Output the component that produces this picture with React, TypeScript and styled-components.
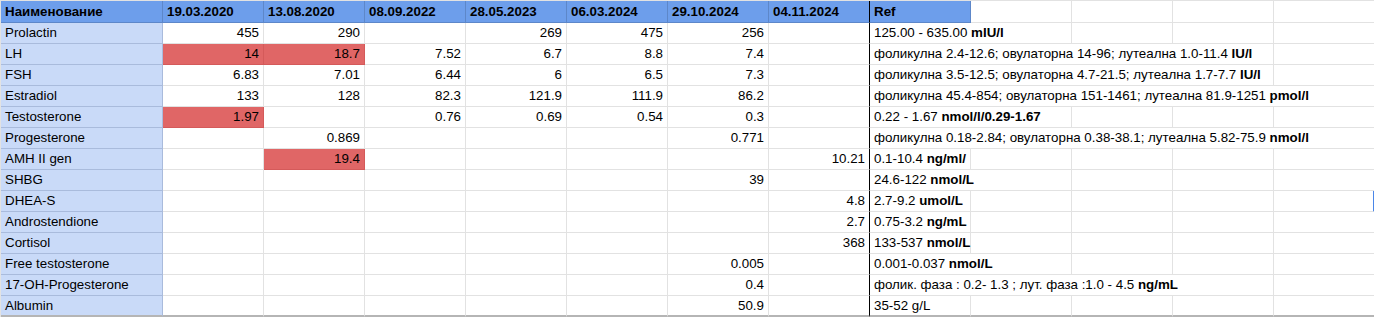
import React from 'react';
import styled, { createGlobalStyle, css } from 'styled-components';

const GlobalStyle = createGlobalStyle`
  html, body {
    margin: 0;
    padding: 0;
    background: #fff;
  }
  body {
    font-family: "Liberation Sans", Arial, sans-serif;
    font-size: 13.33px;
    color: #000;
    overflow: hidden;
  }
`;

type Tone = 'head' | 'label' | 'plain' | 'red';

const Sheet = styled.div`
  display: grid;
  grid-template-columns: 162px repeat(12, 101px);
  grid-auto-rows: 21px;
  grid-template-rows: 22px;
  border-top: 1px solid #e2e2e2;
  border-left: 1px solid #e2e2e2;
  width: max-content;
`;

const tones = {
  head: css`
    background: #6d9eeb;
    font-weight: bold;
    border-color: rgba(0, 0, 0, 0.14);
  `,
  label: css`
    background: #c9daf8;
    border-color: #a9bbdc;
  `,
  plain: css`
    background: #fff;
    border-color: #e2e2e2;
  `,
  red: css`
    background: #e06666;
    border-color: #d45a5a;
  `,
};

const Cell = styled.div<{
  $tone: Tone;
  $right?: boolean;
  $span?: number;
  $divider?: boolean;
  $last?: boolean;
  $cursor?: boolean;
}>`
  box-sizing: border-box;
  border-right: 1px solid;
  border-bottom: 1px solid;
  padding: 0 4px;
  line-height: 20px;
  white-space: nowrap;
  overflow: visible;
  text-align: ${(p) => (p.$right ? 'right' : 'left')};
  grid-column: span ${(p) => p.$span ?? 1};
  ${(p) => tones[p.$tone]}
  ${(p) =>
    p.$tone === 'head' &&
    css`
      line-height: 21px;
    `}
  ${(p) =>
    p.$divider &&
    css`
      border-right-color: #000;
    `}
  ${(p) =>
    p.$cursor &&
    css`
      border-right: 2px solid #4a86e8;
    `}
  ${(p) =>
    p.$last &&
    css`
      border-bottom: 2px solid #b5b5b5;
    `}
  b {
    font-weight: bold;
  }
`;

type Row = {
  name: string;
  values: (number | string)[];
  red?: number[];
  ref: string;
  unit?: string;
  span: number;
};

const dates = ['19.03.2020', '13.08.2020', '08.09.2022', '28.05.2023', '06.03.2024', '29.10.2024', '04.11.2024'];

const rows: Row[] = [
  { name: 'Prolactin', values: [455, 290, '', 269, 475, 256, ''], ref: '125.00 - 635.00 ', unit: 'mIU/l', span: 2 },
  {
    name: 'LH',
    values: [14, 18.7, 7.52, 6.7, 8.8, 7.4, ''],
    red: [0, 1],
    ref: 'фоликулна 2.4-12.6; овулаторна 14-96; лутеална 1.0-11.4 ',
    unit: 'IU/l',
    span: 4,
  },
  {
    name: 'FSH',
    values: [6.83, 7.01, 6.44, 6, 6.5, 7.3, ''],
    ref: 'фоликулна 3.5-12.5; овулаторна 4.7-21.5; лутеална 1.7-7.7 ',
    unit: 'IU/l',
    span: 4,
  },
  {
    name: 'Estradiol',
    values: [133, 128, 82.3, 121.9, 111.9, 86.2, ''],
    ref: 'фоликулна 45.4-854; овулаторна 151-1461; лутеална 81.9-1251 ',
    unit: 'pmol/l',
    span: 5,
  },
  {
    name: 'Testosterone',
    values: [1.97, '', 0.76, 0.69, 0.54, 0.3, ''],
    red: [0],
    ref: '0.22 - 1.67 ',
    unit: 'nmol/l/0.29-1.67',
    span: 2,
  },
  {
    name: 'Progesterone',
    values: ['', 0.869, '', '', '', 0.771, ''],
    ref: 'фоликулна 0.18-2.84; овулаторна 0.38-38.1; лутеална 5.82-75.9 ',
    unit: 'nmol/l',
    span: 5,
  },
  { name: 'AMH II gen', values: ['', 19.4, '', '', '', '', 10.21], red: [1], ref: '0.1-10.4 ', unit: 'ng/ml/', span: 1 },
  { name: 'SHBG', values: ['', '', '', '', '', 39, ''], ref: '24.6-122 ', unit: 'nmol/L', span: 2 },
  { name: 'DHEA-S', values: ['', '', '', '', '', '', 4.8], ref: '2.7-9.2 ', unit: 'umol/L', span: 1 },
  { name: 'Androstendione', values: ['', '', '', '', '', '', 2.7], ref: '0.75-3.2 ', unit: 'ng/mL', span: 1 },
  { name: 'Cortisol', values: ['', '', '', '', '', '', 368], ref: '133-537 ', unit: 'nmol/L', span: 1 },
  { name: 'Free testosterone', values: ['', '', '', '', '', '0.005', ''], ref: '0.001-0.037 ', unit: 'nmol/L', span: 2 },
  {
    name: '17-OH-Progesterone',
    values: ['', '', '', '', '', 0.4, ''],
    ref: 'фолик. фаза : 0.2- 1.3 ; лут. фаза :1.0 - 4.5 ',
    unit: 'ng/mL',
    span: 4,
  },
  { name: 'Albumin', values: ['', '', '', '', '', 50.9, ''], ref: '35-52 g/L', span: 1 },
];

const EXTRA = 5;

const App = () => (
  <>
    <GlobalStyle />
    <Sheet>
      <Cell $tone="head">Наименование</Cell>
      {dates.map((d, i) => (
        <Cell key={d} $tone="head" $divider={i === dates.length - 1}>
          {d}
        </Cell>
      ))}
      <Cell $tone="head">Ref</Cell>
      {Array.from({ length: EXTRA - 1 }).map((_, i) => (
        <Cell key={`h${i}`} $tone="plain" />
      ))}

      {rows.map((row, r) => {
        const last = r === rows.length - 1;
        const rest = EXTRA - row.span;
        return (
          <React.Fragment key={row.name}>
            <Cell $tone="label" $last={last}>
              {row.name}
            </Cell>
            {row.values.map((v, i) => (
              <Cell
                key={i}
                $tone={row.red?.includes(i) ? 'red' : 'plain'}
                $right
                $divider={i === row.values.length - 1}
                $last={last}
              >
                {v}
              </Cell>
            ))}
            <Cell $tone="plain" $span={row.span} $last={last} $cursor={row.name === 'DHEA-S' && rest === 0}>
              {row.ref}
              {row.unit && <b>{row.unit}</b>}
            </Cell>
            {Array.from({ length: rest }).map((_, i) => (
              <Cell
                key={`e${i}`}
                $tone="plain"
                $last={last}
                $cursor={row.name === 'DHEA-S' && i === rest - 1}
              />
            ))}
          </React.Fragment>
        );
      })}
    </Sheet>
  </>
);

export default App;
